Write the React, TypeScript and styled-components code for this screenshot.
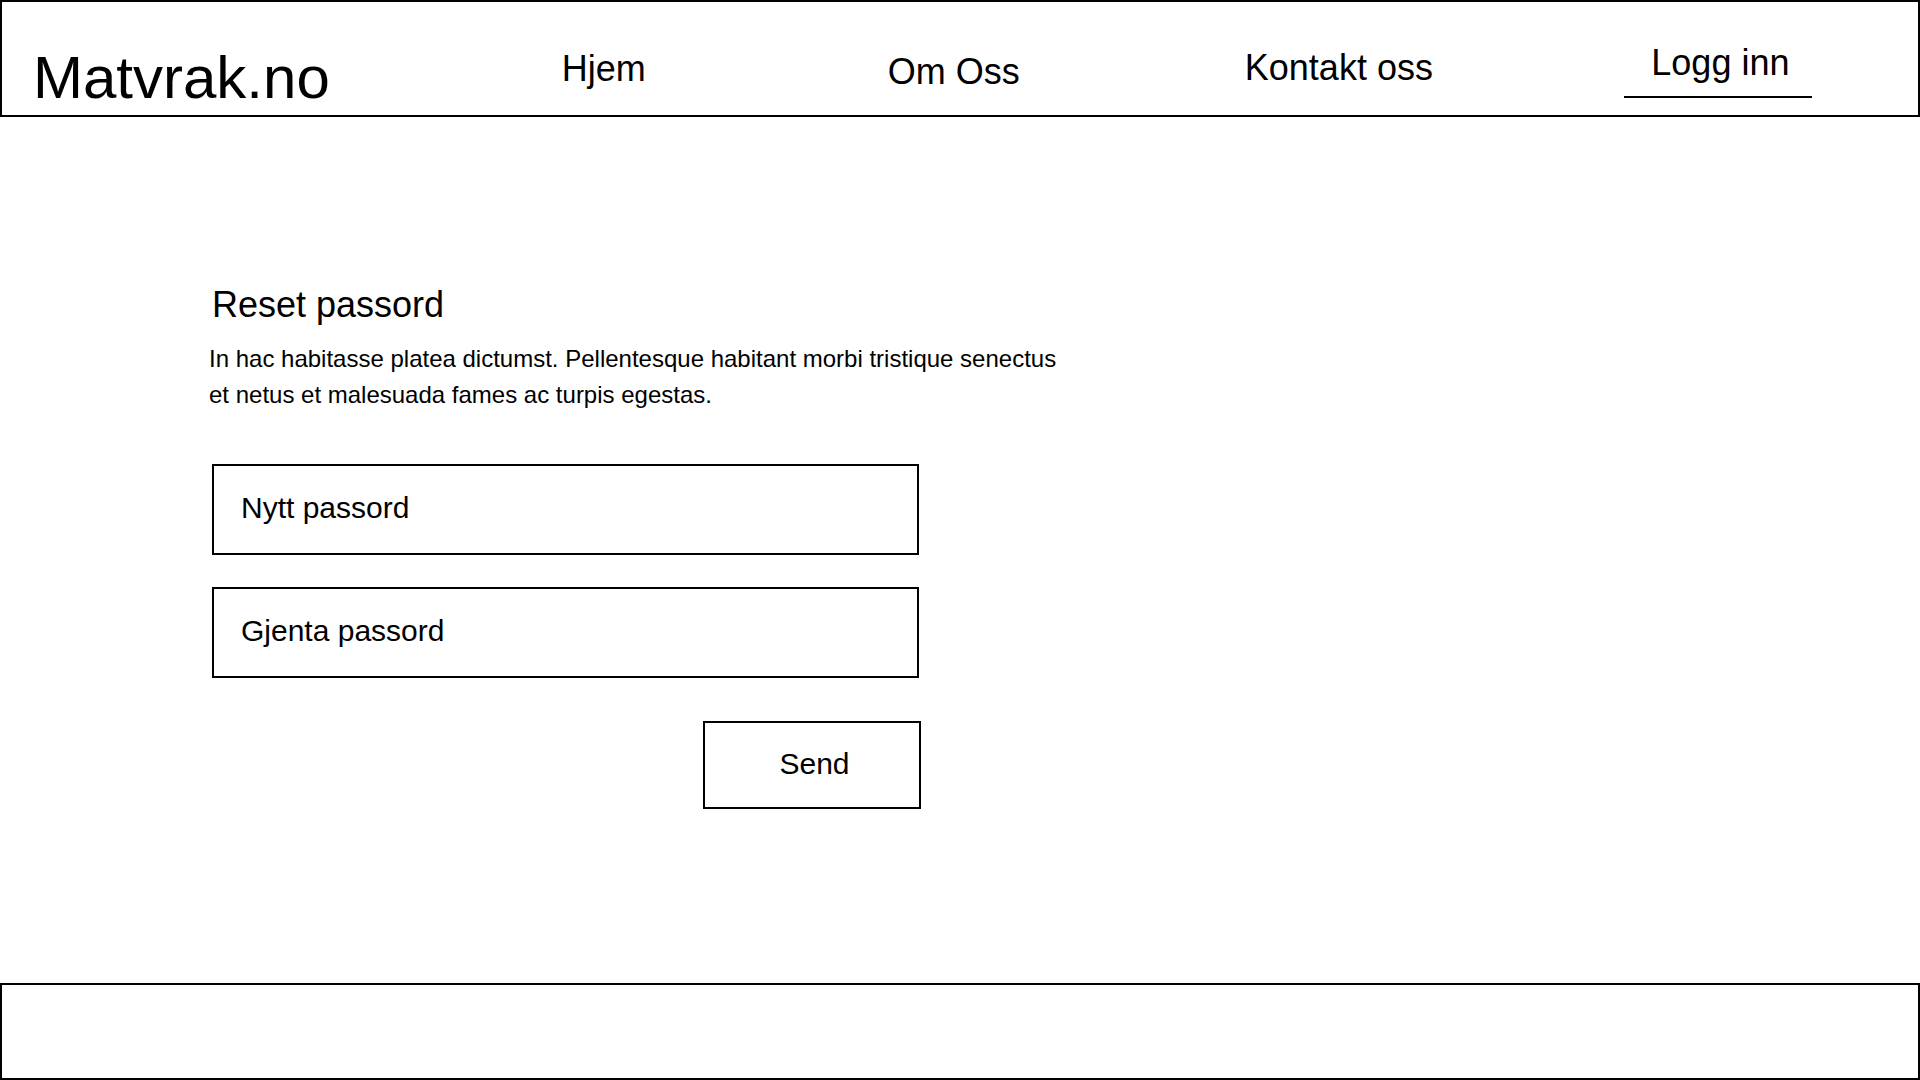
import React from "react";
import styled, { createGlobalStyle } from "styled-components";

const GlobalStyle = createGlobalStyle`
  *, *::before, *::after { box-sizing: border-box; }
  html, body { margin: 0; padding: 0; background: #ffffff; }
  body {
    font-family: "Liberation Sans", Arial, Helvetica, sans-serif;
    color: #000000;
  }
`;

const Page = styled.div`
  display: flex;
  flex-direction: column;
  width: 1920px;
  height: 1080px;
  overflow: hidden;
`;

const Header = styled.header`
  display: flex;
  align-items: flex-start;
  height: 117px;
  border: 2px solid #000;
  flex-shrink: 0;
`;

const Logo = styled.div`
  margin-left: 31px;
  margin-top: 46px;
  font-size: 60px;
  line-height: 1;
  white-space: nowrap;
`;

const NavItem = styled.a<{ $left: number; $top: number; $active?: boolean }>`
  display: block;
  margin-left: ${(p) => p.$left}px;
  margin-top: ${(p) => p.$top}px;
  font-size: 36px;
  line-height: 1;
  color: #000;
  text-decoration: none;
  white-space: nowrap;
  ${(p) =>
    p.$active &&
    `
    width: 188px;
    text-align: center;
    padding: 0 0 15px 5px;
    border-bottom: 2px solid #000;
  `}
`;

const Main = styled.main`
  flex: 1;
  display: flex;
  flex-direction: column;
  align-items: flex-start;
  padding: 166px 0 0 211px;
`;

const Title = styled.h1`
  margin: 0 0 0 1px;
  font-size: 36px;
  font-weight: 400;
  line-height: 44px;
`;

const Lead = styled.p`
  margin: 14px 0 0 -2px;
  width: 860px;
  font-size: 24px;
  line-height: 36px;
`;

const Form = styled.form`
  display: flex;
  flex-direction: column;
  align-items: flex-end;
  gap: 32px;
  width: 708px;
  margin-top: 51px;
`;

const Field = styled.div`
  display: flex;
  align-items: center;
  width: 707px;
  height: 91px;
  padding: 0 0 3px 27px;
  border: 2px solid #000;
  font-size: 30px;
`;

const SendButton = styled.button`
  width: 218px;
  height: 88px;
  margin: 11px -2px 0 0;
  border: 2px solid #000;
  background: #fff;
  font-family: "Liberation Sans", Arial, sans-serif;
  font-size: 30px;
  color: #000;
  padding: 0 0 3px 5px;
`;

const Footer = styled.footer`
  height: 97px;
  border: 2px solid #000;
  flex-shrink: 0;
`;

export default function App() {
  return (
    <>
      <GlobalStyle />
      <Page>
        <Header>
          <Logo>Matvrak.no</Logo>
          <NavItem $left={232} $top={49}>Hjem</NavItem>
          <NavItem $left={242} $top={52}>Om Oss</NavItem>
          <NavItem $left={225} $top={48}>Kontakt oss</NavItem>
          <NavItem $left={191} $top={43} $active>Logg inn</NavItem>
        </Header>
        <Main>
          <Title>Reset passord</Title>
          <Lead>
            In hac habitasse platea dictumst. Pellentesque habitant morbi tristique senectus et netus et
            malesuada fames ac turpis egestas.
          </Lead>
          <Form onSubmit={(e) => e.preventDefault()}>
            <Field>Nytt passord</Field>
            <Field>Gjenta passord</Field>
            <SendButton type="submit">Send</SendButton>
          </Form>
        </Main>
        <Footer />
      </Page>
    </>
  );
}
